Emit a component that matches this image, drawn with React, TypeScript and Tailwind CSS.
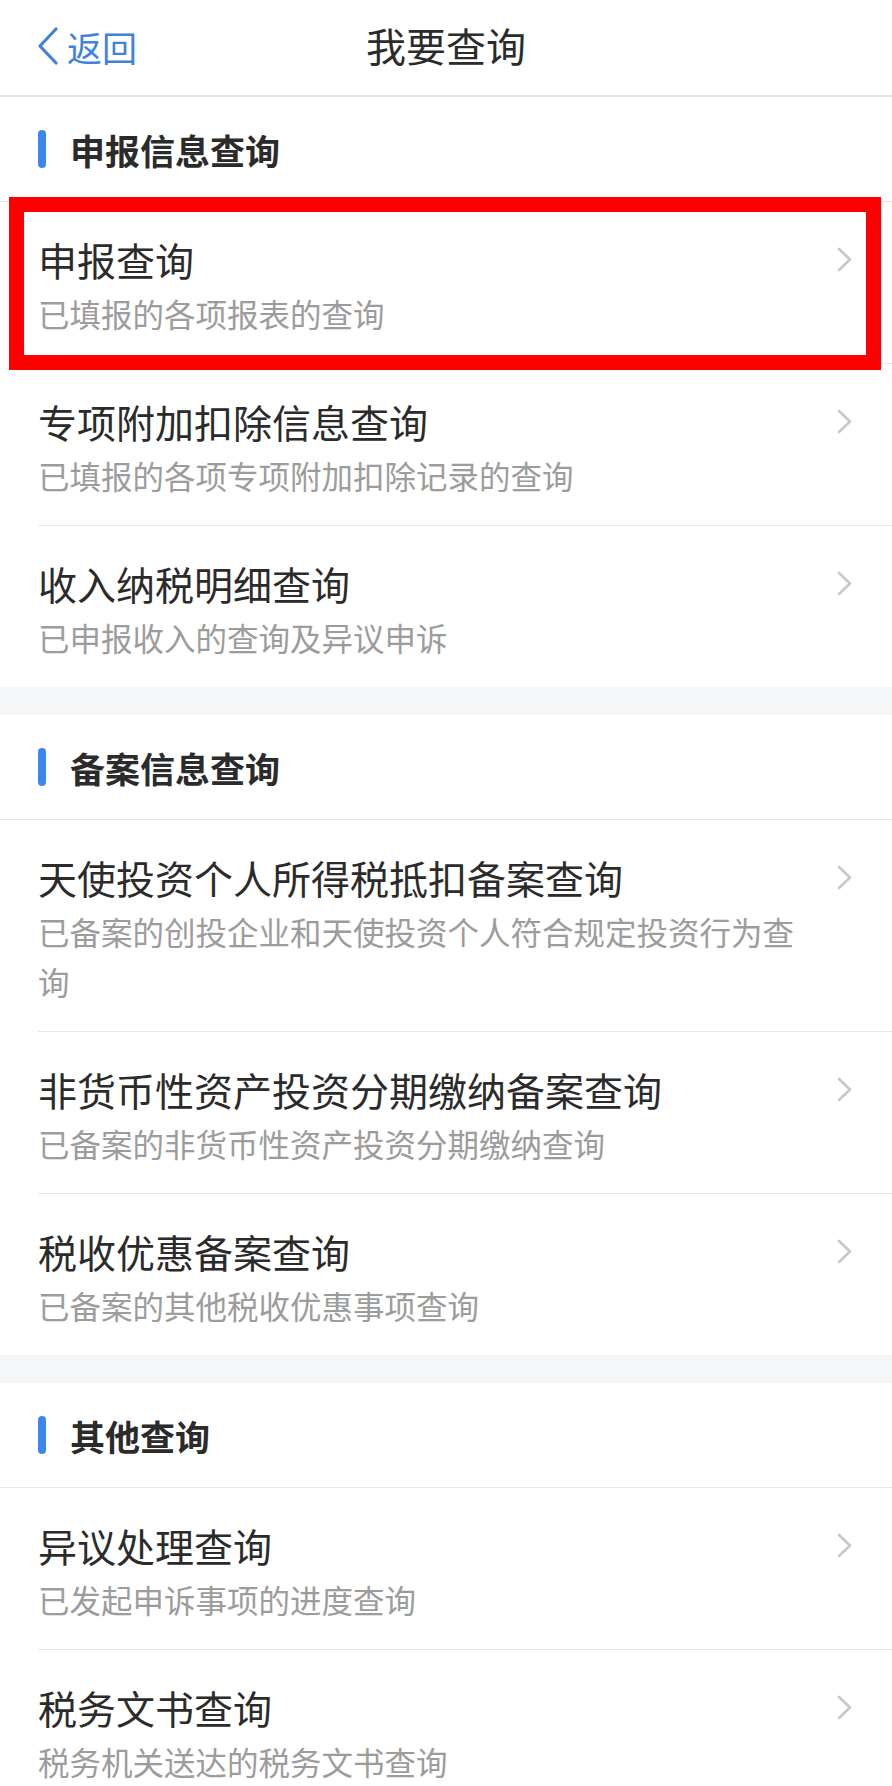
type Item = { title: string; desc: string };
type Section = { name: string; items: Item[] };

const sections: Section[] = [
  {
    name: '申报信息查询',
    items: [
      { title: '申报查询', desc: '已填报的各项报表的查询' },
      { title: '专项附加扣除信息查询', desc: '已填报的各项专项附加扣除记录的查询' },
      { title: '收入纳税明细查询', desc: '已申报收入的查询及异议申诉' },
    ],
  },
  {
    name: '备案信息查询',
    items: [
      { title: '天使投资个人所得税抵扣备案查询', desc: '已备案的创投企业和天使投资个人符合规定投资行为查询' },
      { title: '非货币性资产投资分期缴纳备案查询', desc: '已备案的非货币性资产投资分期缴纳查询' },
      { title: '税收优惠备案查询', desc: '已备案的其他税收优惠事项查询' },
    ],
  },
  {
    name: '其他查询',
    items: [
      { title: '异议处理查询', desc: '已发起申诉事项的进度查询' },
      { title: '税务文书查询', desc: '税务机关送达的税务文书查询' },
    ],
  },
];

const font = { fontFamily: '"Noto Sans CJK SC", "Noto Sans", sans-serif' };

function Row({ item, last, highlight }: { item: Item; last: boolean; highlight?: boolean }) {
  return (
    <div className="relative pl-[38px]">
      <div className={`flex items-start ${last ? '' : 'border-b border-[#e6e6e6]'}`}>
        <div className="w-[766px] pt-[31px] pb-[25px]">
          <div className="text-[39px] leading-[52px] text-[#2b2b2b]">{item.title}</div>
          <div className="mt-[3px] text-[31.5px] leading-[50px] text-[#9c9c9c]">{item.desc}</div>
        </div>
        <div className="flex flex-1 justify-end pr-[39px] pt-[45px]">
          <svg width="16" height="25" viewBox="0 0 16 25" fill="none">
            <polyline points="2,2 13,12.5 2,23" stroke="#c8c8cc" strokeWidth="2.6" strokeLinecap="round" strokeLinejoin="round" />
          </svg>
        </div>
      </div>
      {/* red annotation frame */}
      {highlight && (
        <div className="absolute left-[9px] right-[11px] top-[-5px] bottom-[-6px] border-[15px] border-[#ff0000] pointer-events-none" />
      )}
    </div>
  );
}

export default function App() {
  return (
    <div className="w-[892px] h-[1786px] overflow-hidden bg-white" style={font}>
      {/* Nav bar */}
      <div className="relative flex items-center justify-center h-[97px] border-b-2 border-[#e4e4e4]">
        <div className="absolute left-[37px] top-0 h-[92px] flex items-center gap-[8px] text-[#3f82dc]">
          <svg width="22" height="38" viewBox="0 0 22 38" fill="none">
            <polyline points="19,2 3,19 19,36" stroke="#3f82dc" strokeWidth="3.2" strokeLinecap="round" strokeLinejoin="round" />
          </svg>
          <span className="text-[35px] leading-none">返回</span>
        </div>
        <span className="text-[40px] leading-none text-[#2b2b2b] -mt-[6px]">我要查询</span>
      </div>

      {sections.map((section, si) => (
        <div key={section.name}>
          {si > 0 && <div className="h-[28px] bg-[#f5f6f8]" />}
          <div className="flex items-center h-[105px] pl-[38px] border-b border-[#e6e6e6]">
            <div className="w-[8px] h-[38px] rounded-full bg-[#3d86f0]" />
            <span className="ml-[24px] text-[35px] font-bold leading-none text-[#2b2b2b]">{section.name}</span>
          </div>
          {section.items.map((item, i) => (
            <Row
              key={item.title}
              item={item}
              last={i === section.items.length - 1}
              highlight={si === 0 && i === 0}
            />
          ))}
        </div>
      ))}
    </div>
  );
}
